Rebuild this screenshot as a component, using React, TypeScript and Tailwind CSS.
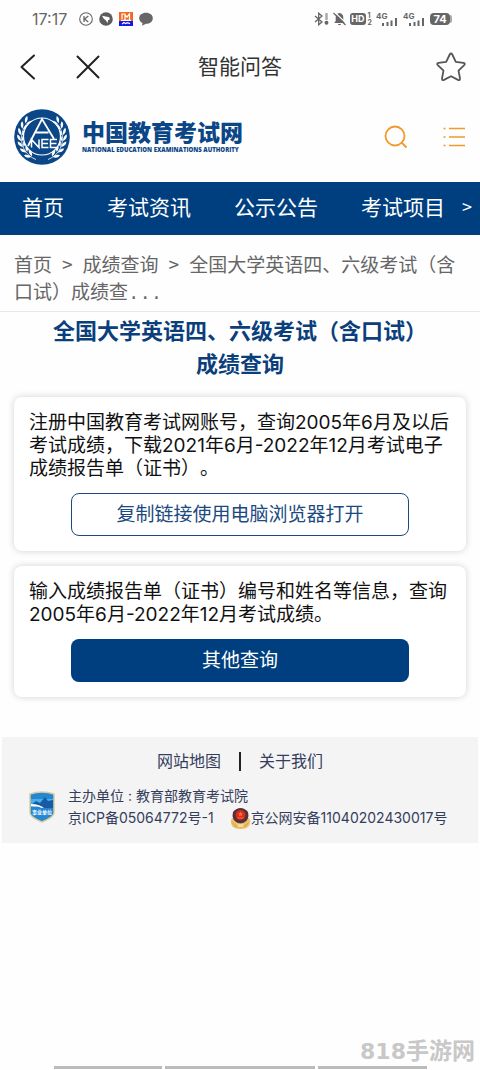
import React from "react";

const navItems = ["首页", "考试资讯", "公示公告", "考试项目"];

function StatusBar() {
  return (
    <div className="flex h-[38px] items-center justify-between pl-8 pr-7 text-[#666]">
      <div className="flex items-center gap-[6px]">
        <span className="mr-[6px] text-base leading-5">17:17</span>
        <svg className="size-[14px]" viewBox="0 0 14 14" fill="none" stroke="currentColor">
          <circle cx="7" cy="7" r="6.3" strokeWidth="1.1" />
          <path d="M5 4v6M9.300 4 5.600 7l3.700 3" strokeWidth="1.300" />
        </svg>
        <svg className="size-[14px]" viewBox="0 0 14 14">
          <circle cx="7" cy="7" r="6.800" fill="#5c5c5c" />
          <path d="M3 3.800 6.800 4.600 10.300 5.200 10.800 7.500 9 8.200l-.3 2.800-2.200-3L4.800 6.800z" fill="#fff" />
        </svg>
        <svg className="size-[14px]" viewBox="0 0 14 14">
          <path d="M0 0h14v9H0z" fill="#f26a21" />
          <path d="M0 9h14v5H0z" fill="#1515e8" />
          <path d="M3 7V2h3v3M6 8V3l2 2 2.500-3V8M2 8.300h10M3 12l2-1.400 1.500 1 2-1 2.500 1" stroke="#fff" strokeWidth="1.200" fill="none" />
        </svg>
        <svg className="size-[14px]" viewBox="0 0 14 14" fill="#666">
          <path d="M7 .7c4 0 6.800 2.300 6.800 5.500S11 11.800 7 11.800l-3.900 2 .4-2.700C1.400 10 .2 8.300.2 6.200.2 3 3 .7 7 .7z" />
        </svg>
      </div>
      <div className="flex items-center gap-1">
        <svg className="h-[14px] w-[15px]" viewBox="0 0 15 14" fill="none" stroke="currentColor" strokeWidth="1.300">
          <path d="m1 4 7 6-3.300 2.800V1.200L8 4l-7 6" />
          <path d="M12.500 1v7" stroke="#aaa" strokeWidth="2.500" />
          <circle cx="12.500" cy="10.800" r="1.300" fill="currentColor" />
        </svg>
        <svg className="h-[14px] w-[13px]" viewBox="0 0 13 14">
          <path d="M6.500 1C9 1.500 10.300 3.200 10.300 5.500V9l1.500 2H1.200l1.500-2V5.500C2.700 3.200 4 1.500 6.500 1zM5 12h3c-.5 1.600-2.500 1.600-3 0z" fill="#666" />
          <path d="m1.500 0 12 11.500" stroke="#fff" strokeWidth="1.200" />
          <path d="m.5 1 12 12" stroke="#666" strokeWidth="1.300" />
        </svg>
        <div className="flex items-center gap-[2px]">
          <span className="rounded-[3px] bg-[#666] px-[1px] text-[9px] font-bold leading-[12px] text-white">HD</span>
          <span className="flex flex-col text-[7px] font-bold leading-[7px]"><span>1</span><span>2</span></span>
        </div>
        <Signal />
        <Signal />
        <div className="flex items-center">
          <span className="h-3 w-[20px] rounded-[4px] bg-[#666] text-center text-[11px] font-bold leading-3 text-white">74</span>
          <span className="h-2 w-[2px] rounded-r bg-[#aaa]" />
        </div>
      </div>
    </div>
  );
}

function Signal() {
  return (
    <svg className="h-[15px] w-[23px]" viewBox="0 0 23 15" fill="#666">
      <text x="0" y="7" fontSize="8" fontWeight="700" fontFamily="Inter, sans-serif">4G</text>
      <path d="M6 11h2v3H6zM10.500 10h2v4h-2zM14.500 8.500h2V14h-2zM19 6h2v8h-2z" />
    </svg>
  );
}

function Laurel() {
  return (
    <g fill="#fff">
      <path d="M22 50.500C13 47 7.500 39 7.500 29.500c0-6 2-11 5.500-15" fill="none" stroke="#fff" strokeWidth=".8" />
      {[
        [13, 13, 35], [9.5, 18, 20], [7.5, 24, 5], [7.2, 30, -8], [8.5, 36, -22], [11.5, 41.5, -38], [16, 46.5, -55],
      ].map(([x, y, r]) => (
        <g key={y} transform={`translate(${x} ${y}) rotate(${r})`}>
          <path d="M-.5 2C-4-.5-4-3-3.200-5-1-3.500 0-1-.5 2zM.5 2C.5-1.500 2-3.500 4.500-4.500 5-2 3.500 1 .5 2z" />
        </g>
      ))}
    </g>
  );
}

function Emblem() {
  return (
    <svg className="size-14 shrink-0" viewBox="0 0 56 56" role="img" aria-label="NEEA">
      <circle cx="28" cy="28" r="27.800" fill="#0b4787" />
      <Laurel />
      <g transform="matrix(-1 0 0 1 56 0)"><Laurel /></g>
      <circle cx="28" cy="27.500" r="18.500" fill="#0b4787" stroke="#fff" strokeWidth="1.200" />
      <path d="M14 37 28 10l12 20M21.500 23.500h13" fill="none" stroke="#fff" strokeWidth="1.800" />
      <path d="M17.500 38.500v-8l7.500 8v-8M34.500 30.500h-6.500v8h6.500M28 34.500h6M43 30.500h-6.500v8h6.500M36.500 34.500h6" fill="none" stroke="#fff" strokeWidth="1.500" />
    </svg>
  );
}

function Card({ text, children }: { text: string; children: React.ReactNode }) {
  return (
    <section className="flex flex-col items-center rounded-lg bg-white px-[15px] pb-[15px] pt-[14px] shadow-[0_0_7px_rgba(0,0,0,0.18)]">
      <p className="w-full text-[19px] leading-[23px] text-[#111] [text-spacing-trim:space-all]">{text}</p>
      {children}
    </section>
  );
}

export default function App() {
  return (
    <div className="relative flex min-h-screen flex-col bg-[#fefefe] font-[Inter,'Noto_Sans_CJK_SC',sans-serif]">
      <StatusBar />
      <header className="grid h-[58px] grid-cols-3 items-center px-[14px]">
        <div className="flex items-center gap-[34px] pl-[2px]">
          <button type="button" aria-label="返回">
            <svg className="h-7 w-6" viewBox="0 0 24 28" fill="none" stroke="#222" strokeWidth="2" strokeLinecap="round" strokeLinejoin="round"><path d="M18 2.500 5.500 14 18 25.500" /></svg>
          </button>
          <button type="button" aria-label="关闭">
            <svg className="size-7" viewBox="0 0 28 28" stroke="#222" strokeWidth="2" strokeLinecap="round"><path d="m3.500 3.500 21 21M24.500 3.500l-21 21" /></svg>
          </button>
        </div>
        <h1 className="text-center text-[21px] leading-7 text-[#333]">智能问答</h1>
        <button type="button" aria-label="收藏" className="justify-self-end">
          <svg className="size-[30px]" viewBox="0 0 30 30" fill="none" stroke="#555" strokeWidth="1.800" strokeLinejoin="round">
            <path d="M13.700 2.500q1.300-2 2.600 0l3.500 7.300 7.700 1q2.200.6.7 2.300l-5.700 5.500 1.500 7.800q.1 2.300-2 1.500L15 24.200l-7 3.700q-2.100.8-2-1.500l1.500-7.800-5.700-5.500q-1.500-1.700.7-2.300l7.700-1z" />
          </svg>
        </button>
      </header>

      <div className="mb-[5px] flex h-[81px] items-center justify-between px-[14px]">
        <a href="#" className="flex items-center gap-3 text-[#0b4787]">
          <Emblem />
          <span className="flex flex-col">
            <span className="text-[23px] font-black leading-[26px]">中国教育考试网</span>
            <span className="whitespace-nowrap font-['Open_Sans',sans-serif] text-[6px] font-extrabold leading-[8px]">NATIONAL EDUCATION EXAMINATIONS AUTHORITY</span>
          </span>
        </a>
        <div className="flex items-center gap-[34px]">
          <button type="button" aria-label="搜索">
            <svg className="size-6" viewBox="0 0 24 24" fill="none" stroke="#f09a2a" strokeWidth="1.800"><circle cx="11" cy="11" r="9.500" /><path d="m17.500 17.500 5 5" /></svg>
          </button>
          <button type="button" aria-label="菜单">
            <svg className="size-6" viewBox="0 0 24 24" stroke="#f09a2a" strokeWidth="1.600"><path d="M7 3.500h16M7 12h16M7 20.500h16M1.500 3.500h2M1.500 12h2M1.500 20.500h2" /></svg>
          </button>
        </div>
      </div>

      <nav className="flex h-[53px] items-start justify-between bg-[#003f7f] pl-[22px] pr-2 pt-[11px] text-white">
        <div className="flex gap-[43px] whitespace-nowrap text-[21px] leading-[30px]">
          {navItems.map((item) => (
            <a href="#" key={item}>{item}</a>
          ))}
        </div>
        <button type="button" aria-label="更多" className="font-['Noto_Sans_CJK_SC',sans-serif] text-lg leading-[27px]">&gt;</button>
      </nav>

      <div className="border-b border-[#e8e8e8] px-[14px] pb-[3px] pt-[15px] font-['Noto_Sans_CJK_SC',sans-serif] text-[19px] leading-[27px] text-[#666]">
        <a href="#">首页</a>
        <span className="px-[10px]">&gt;</span>
        <a href="#">成绩查询</a>
        <span className="px-[10px]">&gt;</span>
        <span>全国大学英语四、六级考试（含</span><span>口试）成绩查</span><span className="font-['Liberation_Mono',monospace]">...</span>
      </div>

      <main className="flex flex-col gap-[15px] px-[14px] pb-10 pt-[3px]">
        <h2 className="mb-[1px] text-center text-[22px] font-bold leading-[33px] text-[#0b3f7c] [text-spacing-trim:space-all]">全国大学英语四、六级考试（含口试）<br />成绩查询</h2>
        <Card text="注册中国教育考试网账号，查询2005年6月及以后考试成绩，下载2021年6月-2022年12月考试电子成绩报告单（证书）。">
          <button type="button" className="mt-[13px] h-[43px] w-4/5 rounded-lg border border-[#1b4a80] text-[19px] leading-6 text-[#1b4a80]">复制链接使用电脑浏览器打开</button>
        </Card>
        <Card text="输入成绩报告单（证书）编号和姓名等信息，查询2005年6月-2022年12月考试成绩。">
          <button type="button" className="mt-[13px] h-[43px] w-4/5 rounded-lg bg-[#003f7f] text-[19px] leading-6 text-white">其他查询</button>
        </Card>
      </main>

      <footer className="mx-[2px] bg-[#f4f4f4] pb-[14px] pt-3 text-[#343e5c]">
        <div className="flex items-center justify-center gap-[18px] text-base leading-6">
          <a href="#">网站地图</a>
          <span className="h-[19px] w-[2px] bg-[#222]" />
          <a href="#">关于我们</a>
        </div>
        <div className="mt-3 flex items-center gap-[13px] pl-[27px] text-sm leading-[22px]">
          <svg className="h-8 w-[26px] shrink-0" viewBox="0 0 26 32">
            <path d="M1 3Q13-1 25 3v19q0 4-12 9Q1 26 1 22z" fill="#2387d2" stroke="#dccb9c" strokeWidth="1.500" />
            <path d="M2 8h22v8H2z" fill="#4bb0e9" />
            <path d="m2 14 5-4 4 2 5-6 3 4 5-1v8H12z" fill="#185aa5" />
            <path d="M2 13q9 0 14 5-7-3-14-3z" fill="#fff" />
            <path d="M2 17h22v6H2z" fill="#2387d2" />
            <text x="13" y="23" textAnchor="middle" fontSize="5" fontWeight="700" fill="#fff">事业单位</text>
          </svg>
          <div>
            <p>主办单位 : 教育部教育考试院</p>
            <p className="flex items-center whitespace-nowrap">
              <a href="#">京ICP备05064772号-1</a>
              <svg className="ml-4 size-[21px]" viewBox="0 0 21 21">
                <path d="M2 10Q-.5 14 2.500 18.500 5 21 10.500 21t8-2.500Q21.500 14 19 10z" fill="#ecc067" />
                <path d="M2.500 15q3 4 8 4t8-4" fill="none" stroke="#cf9a45" />
                <path d="M10.500 0q4 0 7.500 4l.5 4q-1 7-8 7.500-7-.5-8-7.500L3 4q3.500-4 7.500-4z" fill="#54303a" />
                <circle cx="10.500" cy="7" r="5" fill="#dc2a1c" />
                <path d="m10.500 3.500.8 1.700h1.900l-1.400 1.300.4 1.900-1.700-1-1.700 1 .4-1.900-1.400-1.300h1.900zM7.500 9.500h6v1h-6z" fill="#f2763a" />
                <path d="M7 17q3.500-2.500 7 0l-1 2H8z" fill="#f6dc9c" />
              </svg>
              <a href="#">京公网安备11040202430017号</a>
            </p>
          </div>
        </div>
      </footer>

      <div className="mt-auto flex gap-[3px] pb-[1px] pl-[54px] pr-[53px]">
        <span className="h-[3px] flex-[108] bg-[#bbb]" />
        <span className="h-[3px] flex-[150] bg-[#bbb]" />
        <span className="h-[3px] flex-[109] bg-[#bbb]" />
      </div>
      <div className="absolute bottom-1 right-[5px] text-[23px] font-bold leading-7 text-[#c8c8c8]">
        <span className="font-['DejaVu_Sans',sans-serif] text-[22px]">818</span>手游网
      </div>
    </div>
  );
}
